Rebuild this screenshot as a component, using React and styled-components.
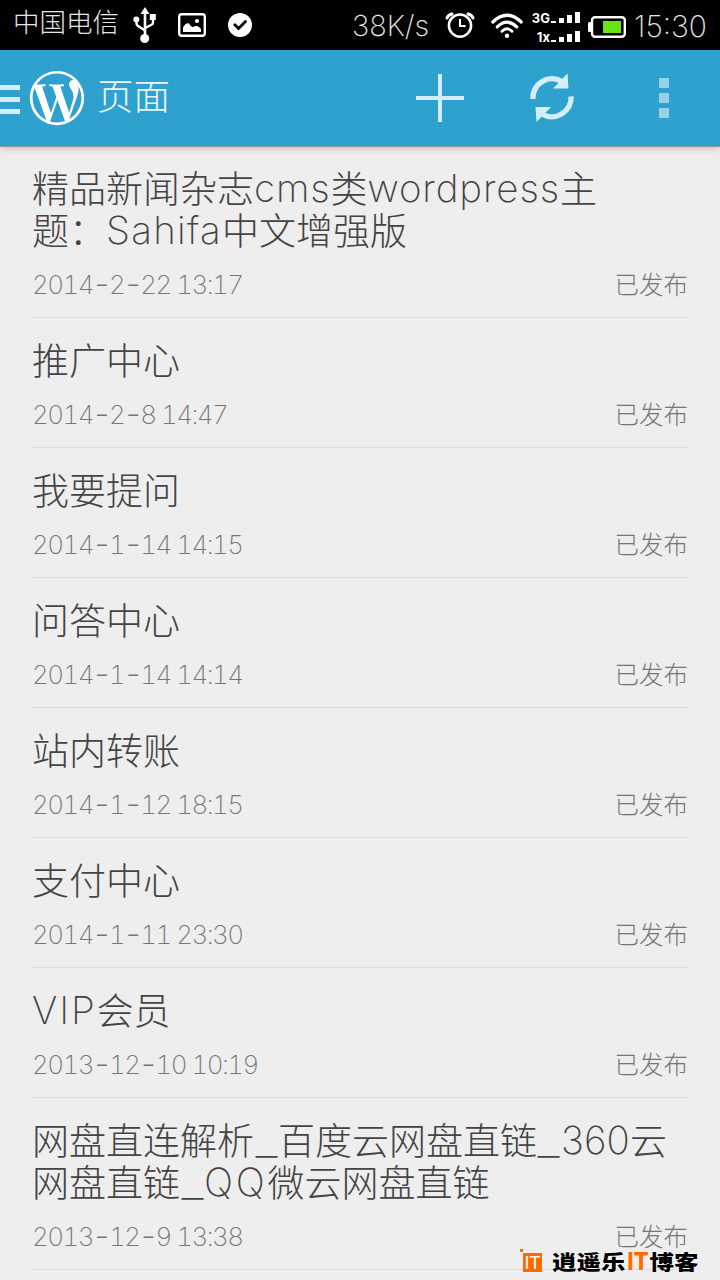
import styled, { createGlobalStyle } from "styled-components";
import { FaWordpressSimple } from "react-icons/fa";

const pages = [
  {
    title: ["精品新闻杂志cms类wordpress主", "题：Sahifa中文增强版"],
    date: "2014-2-22 13:17",
  },
  { title: ["推广中心"], date: "2014-2-8 14:47" },
  { title: ["我要提问"], date: "2014-1-14 14:15" },
  { title: ["问答中心"], date: "2014-1-14 14:14" },
  { title: ["站内转账"], date: "2014-1-12 18:15" },
  { title: ["支付中心"], date: "2014-1-11 23:30" },
  { title: ["VIP会员"], date: "2013-12-10 10:19" },
  {
    title: ["网盘直连解析_百度云网盘直链_360云", "网盘直链_QQ微云网盘直链"],
    date: "2013-12-9 13:38",
  },
];

const tracking = (word) => {
  if (word === "QQ") return 2.8;
  if (/^[A-Z]+$/.test(word)) return 1.9;
  if (/^[A-Z]/.test(word)) return 1.3;
  if (/^\d/.test(word)) return 0.2;
  return 0.85;
};

// latin runs get their own face and tracking, underscores are wider
const Mixed = ({ text }) =>
  text
    .split(/(_|[A-Za-z0-9]+)/)
    .filter(Boolean)
    .map((part, i) => {
      if (part === "_") return <Underscore key={i}>_</Underscore>;
      if (/^[A-Za-z0-9]/.test(part))
        return (
          <Latin key={i} $tracking={tracking(part)}>
            {part}
          </Latin>
        );
      return part;
    });

const DateText = ({ text }) =>
  text
    .split(/(-)/)
    .map((part, i) => (part === "-" ? <Dash key={i}>-</Dash> : part));

const UsbIcon = () => (
  <svg width="24" height="38" viewBox="0 0 24 38" fill="none">
    <path d="M12 6V32" stroke="#fff" strokeWidth="2.6" />
    <path
      d="M3.5 14V17.5Q3.5 19 5 20L12 24.5M20 11V16.5Q20 18 18.5 18.8L12 22"
      stroke="#fff"
      strokeWidth="2.4"
    />
    <path d="M12 1L16.5 8H7.5Z" fill="#fff" />
    <circle cx="11.7" cy="32.5" r="4.5" fill="#fff" />
    <circle cx="3.3" cy="13.5" r="3" fill="#fff" />
    <rect x="16.8" y="8" width="6" height="6" fill="#fff" />
  </svg>
);

const GalleryIcon = () => (
  <svg width="28" height="24" viewBox="0 0 28 24" fill="none">
    <rect
      x="1.2"
      y="1.2"
      width="25.6"
      height="21.6"
      rx="2.5"
      stroke="#fff"
      strokeWidth="2.4"
    />
    <path
      d="M5 19V14.5Q8 9 11 10.5Q12.5 13.5 15 14.3Q17 12.5 19.5 13Q22 15 23 16V19Z"
      fill="#fff"
    />
    <circle cx="19" cy="8" r="2.1" fill="#fff" />
  </svg>
);

const CheckIcon = () => (
  <svg width="24" height="24" viewBox="0 0 24 24" fill="none">
    <circle cx="12" cy="12" r="12" fill="#fff" />
    <path
      d="M6.8 11.8L10.5 15.5L17.5 8.5"
      stroke="#000"
      strokeWidth="2.8"
      strokeLinecap="round"
    />
  </svg>
);

const AlarmIcon = () => (
  <svg width="30" height="26" viewBox="0 0 30 26" fill="none" stroke="#fff">
    <circle cx="15" cy="13.6" r="11.1" strokeWidth="2.5" />
    <path d="M15 7V14H20.5" strokeWidth="2" />
    <path
      d="M2 6Q3.5 2.5 7 2M28 6Q26.5 2.5 23 2"
      strokeWidth="3"
      strokeLinecap="round"
    />
  </svg>
);

const WifiIcon = () => (
  <svg
    width="32"
    height="26"
    viewBox="0 0 32 26"
    fill="none"
    stroke="#fff"
    strokeWidth="3.2"
    strokeLinecap="round"
  >
    <path d="M1.8 9Q16 -4.5 30.2 9" />
    <path d="M6.3 13.8Q16 4.5 25.7 13.8" />
    <path d="M11 18.3Q16 13.2 21 18.3" strokeWidth="2.9" />
    <circle cx="16" cy="22.7" r="2.2" fill="#fff" stroke="none" />
  </svg>
);

const BatteryIcon = () => (
  <svg width="38" height="22" viewBox="0 0 38 22" fill="none">
    <rect x="0" y="6" width="4" height="10" rx="1.5" fill="#fff" />
    <rect
      x="4"
      y="1.2"
      width="32.8"
      height="19.6"
      rx="3"
      stroke="#fff"
      strokeWidth="2.4"
    />
    <rect x="15" y="5" width="18" height="12" fill="#66e614" />
  </svg>
);

const RefreshIcon = () => (
  <svg width="46" height="50" viewBox="0 0 46 50" fill="none">
    <g id="half">
      <path
        d="M3.8 26A19.3 20 0 0 1 33 8.5"
        stroke="#d5edf6"
        strokeWidth="5.3"
      />
      <path d="M38.5 0.5L39.5 15.5H24Z" fill="#d5edf6" />
    </g>
    <use href="#half" transform="rotate(180 23 24.7)" />
  </svg>
);

const AddIcon = () => (
  <svg width="48" height="48" viewBox="0 0 48 48">
    <path d="M0 24H48M24 0V48" stroke="#d5edf6" strokeWidth="4" />
  </svg>
);

const SignalRow = ({ label }) => (
  <Signal>
    <b>{label}</b>
    <Bar $w={5} $h={2} />
    <Bar $h={5} />
    <Bar $h={8} />
    <Bar $h={11} />
  </Signal>
);

const App = () => {
  return (
    <Screen>
      <GlobalStyle />
      <StatusBar>
        <Carrier>中国电信</Carrier>
        <Slot $ml={13} $mt={6}>
          <UsbIcon />
        </Slot>
        <Slot $ml={21} $mt={13}>
          <GalleryIcon />
        </Slot>
        <Slot $ml={22} $mt={13}>
          <CheckIcon />
        </Slot>
        <Speed>38K/s</Speed>
        <Slot $ml={15} $mt={12}>
          <AlarmIcon />
        </Slot>
        <Slot $ml={16} $mt={13}>
          <WifiIcon />
        </Slot>
        <Signals>
          <SignalRow label="3G" />
          <SignalRow label="1x" />
        </Signals>
        <Slot $ml={8} $mt={16}>
          <BatteryIcon />
        </Slot>
        <Clock>15:30</Clock>
      </StatusBar>
      <ActionBar>
        <Drawer>
          <i />
          <i />
          <i />
        </Drawer>
        <Logo>
          <FaWordpressSimple size={56} />
        </Logo>
        <Heading>页面</Heading>
        <Actions>
          <AddIcon />
          <RefreshIcon />
          <Overflow>
            <i />
            <i />
            <i />
          </Overflow>
        </Actions>
      </ActionBar>
      <List>
        {pages.map((page) => (
          <Row key={page.title[0]}>
            <Title>
              {page.title.map((line) => (
                <div key={line}>
                  <Mixed text={line} />
                </div>
              ))}
            </Title>
            <Meta>
              <PostDate>
                <DateText text={page.date} />
              </PostDate>
              <Status>已发布</Status>
            </Meta>
          </Row>
        ))}
      </List>
      <Watermark>
        <Badge>IT</Badge>
        <Brand>
          逍遥乐<em>IT</em>博客
        </Brand>
      </Watermark>
    </Screen>
  );
};

export default App;

const GlobalStyle = createGlobalStyle`
  body {
    margin: 0;
    background-color: #eeeeee;
  }

  svg {
    display: block;
    flex-shrink: 0;
  }
`;

const Screen = styled.div`
  position: relative;
  width: 720px;
  height: 1280px;
  overflow: hidden;
  background-color: #eeeeee;
  font-family: "Noto Sans CJK SC", sans-serif;
  font-weight: 300;
  white-space: nowrap;
`;

const StatusBar = styled.div`
  height: 50px;
  display: flex;
  align-items: flex-start;
  background-color: #000;
  color: #e6e6e6;
`;

const Slot = styled.div`
  margin-left: ${(p) => p.$ml}px;
  margin-top: ${(p) => p.$mt}px;
`;

const Carrier = styled.div`
  width: 107px;
  margin-left: 13px;
  font-size: 26.5px;
  line-height: 41px;
`;

const Speed = styled.div`
  width: 78px;
  margin-left: 100px;
  font-family: Inter, sans-serif;
  font-size: 29px;
  font-weight: 200;
  line-height: 51px;
`;

const Clock = styled(Speed)`
  width: 76px;
  margin-left: 8px;
  font-size: 30px;
  line-height: 53px;
`;

const Signals = styled.div`
  width: 49px;
  margin: 12px 0 0 8px;
  display: flex;
  flex-direction: column;
  gap: 8px;
`;

const Signal = styled.div`
  height: 11px;
  display: flex;
  align-items: flex-end;
  justify-content: flex-end;
  gap: 3px;

  b {
    color: #fff;
    font: 700 13px/9px Inter, sans-serif;
    margin-right: -2px;
  }
`;

const Bar = styled.i`
  width: ${(p) => p.$w || 5}px;
  height: ${(p) => p.$h}px;
  background-color: #fff;
`;

const ActionBar = styled.header`
  height: 96px;
  display: flex;
  align-items: center;
  background-color: #2ea1cf;
  box-shadow: 0 1px 1px #999, 0 2px 8px rgba(0, 0, 0, 0.2);
`;

const Drawer = styled.div`
  width: 20px;
  padding-top: 3px;
  display: flex;
  flex-direction: column;
  gap: 7px;

  i {
    height: 5px;
    background-color: #d5edf6;
  }
`;

const Logo = styled.div`
  margin-left: 9px;
  color: #fff;
`;

const Heading = styled.h1`
  flex: 1;
  margin: 0 0 0 12px;
  padding-bottom: 7px;
  color: #eaf6fa;
  font-size: 36.5px;
  font-weight: 300;
  line-height: 80px;
`;

const Actions = styled.div`
  display: flex;
  align-items: center;
  padding-right: 51px;

  svg + svg {
    margin-left: 65px;
  }
`;

const Overflow = styled.div`
  width: 10px;
  margin-left: 84px;
  display: flex;
  flex-direction: column;
  gap: 5px;

  i {
    height: 10px;
    background-color: #97d0e7;
  }
`;

const List = styled.div`
  padding: 0 32px;
`;

const Row = styled.div`
  padding-top: 20px;
  border-bottom: 1px solid #dcdcdc;
`;

const Title = styled.div`
  color: #444;
  font-size: 37px;
  line-height: 42px;

  & > div {
    height: 42px;
  }
`;

const Latin = styled.b`
  font-family: Inter, sans-serif;
  font-size: 38.5px;
  font-weight: 250;
  letter-spacing: ${(p) => p.$tracking || 0}px;
  line-height: 0;
  vertical-align: 1px;
`;

const Underscore = styled(Latin)`
  display: inline-block;
  margin: 0 3.5px;
  transform: scaleX(1.3);
  vertical-align: -1px;
`;

const Meta = styled.div`
  box-sizing: border-box;
  height: 67px;
  display: flex;
  justify-content: space-between;
  align-items: center;
  color: #767676;
`;

const PostDate = styled.span`
  padding-top: 1px;
  font-family: Inter, sans-serif;
  font-size: 26px;
  font-weight: 220;
  font-variant-numeric: tabular-nums;
  letter-spacing: -1.55px;
`;

const Dash = styled.span`
  display: inline-block;
  width: 16px;
  font-size: 34px;
  font-weight: 200;
  letter-spacing: 0;
  line-height: 0;
  text-align: center;
  text-indent: -2px;
  vertical-align: -2px;
`;

const Status = styled.span`
  font-size: 24.5px;
`;

const Watermark = styled.div`
  position: absolute;
  left: 520px;
  top: 1249px;
  height: 24px;
  display: flex;
  align-items: center;
  text-shadow: 0 0 2px #fff, 0 0 2px #fff;
`;

const Badge = styled.div`
  width: 19px;
  height: 19px;
  margin: 2px 0 0 3px;
  background-color: #ff6a00;
  color: #fff;
  font: 400 18px/20px "Liberation Sans", sans-serif;
  text-align: center;
  text-shadow: none;

  &::before {
    content: "";
    position: absolute;
    left: 0;
    top: 0;
    width: 3px;
    height: 3px;
    background-color: #ff6a00;
  }
`;

const Brand = styled.div`
  margin-left: 10px;
  color: #000;
  font-size: 24.5px;
  font-weight: 900;
  line-height: 24px;
  transform: scaleY(0.85);

  em {
    display: inline-block;
    margin: 0 -2px;
    color: #ff6a00;
    font: 800 29px/20px Inter, sans-serif;
    transform: translateY(1px) scaleX(0.77);
  }
`;
